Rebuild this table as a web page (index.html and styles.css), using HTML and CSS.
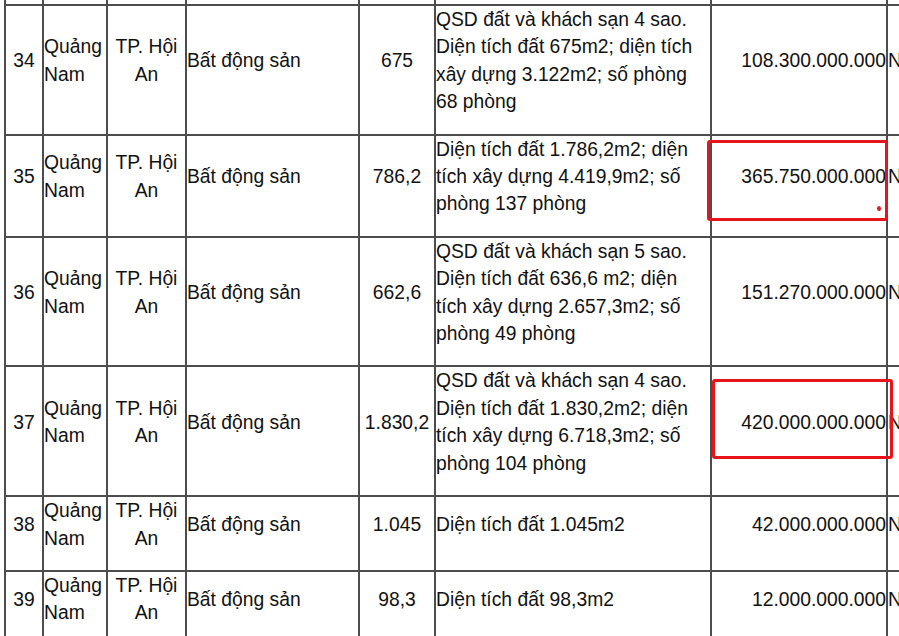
FILE: index.html
```html
<!DOCTYPE html>
<html lang="vi">
<head>
<meta charset="utf-8">
<title>Danh sách tài sản</title>
<link rel="stylesheet" href="styles.css">
</head>
<body>
<div class="page">
  <table class="assets">
    <tr class="spacer">
      <td class="c-no"></td><td class="c-prov"></td><td class="c-city"></td><td class="c-type"></td><td class="c-area"></td><td class="c-desc"></td><td class="c-price"></td><td class="c-next"></td>
    </tr>
    <tr>
      <td class="center">34</td>
      <td>Quảng Nam</td>
      <td class="center">TP. Hội An</td>
      <td>Bất động sản</td>
      <td class="center">675</td>
      <td>QSD đất và khách sạn 4 sao. Diện tích đất 675m2; diện tích xây dựng 3.122m2; số phòng 68 phòng</td>
      <td class="right">108.300.000.000</td>
      <td>Nhà nước</td>
    </tr>
    <tr>
      <td class="center">35</td>
      <td>Quảng Nam</td>
      <td class="center">TP. Hội An</td>
      <td>Bất động sản</td>
      <td class="center">786,2</td>
      <td>Diện tích đất 1.786,2m2; diện tích xây dựng 4.419,9m2; số phòng 137 phòng</td>
      <td class="right">365.750.000.000</td>
      <td>Nhà nước</td>
    </tr>
    <tr>
      <td class="center">36</td>
      <td>Quảng Nam</td>
      <td class="center">TP. Hội An</td>
      <td>Bất động sản</td>
      <td class="center">662,6</td>
      <td>QSD đất và khách sạn 5 sao. Diện tích đất 636,6 m2; diện tích xây dựng 2.657,3m2; số phòng 49 phòng</td>
      <td class="right">151.270.000.000</td>
      <td>Nhà nước</td>
    </tr>
    <tr>
      <td class="center">37</td>
      <td>Quảng Nam</td>
      <td class="center">TP. Hội An</td>
      <td>Bất động sản</td>
      <td class="center">1.830,2</td>
      <td>QSD đất và khách sạn 4 sao. Diện tích đất 1.830,2m2; diện tích xây dựng 6.718,3m2; số phòng 104 phòng</td>
      <td class="right">420.000.000.000</td>
      <td>Nhà nước</td>
    </tr>
    <tr>
      <td class="center">38</td>
      <td>Quảng Nam</td>
      <td class="center">TP. Hội An</td>
      <td>Bất động sản</td>
      <td class="center">1.045</td>
      <td>Diện tích đất 1.045m2</td>
      <td class="right">42.000.000.000</td>
      <td>Nhà nước</td>
    </tr>
    <tr>
      <td class="center">39</td>
      <td>Quảng Nam</td>
      <td class="center">TP. Hội An</td>
      <td>Bất động sản</td>
      <td class="center">98,3</td>
      <td>Diện tích đất 98,3m2</td>
      <td class="right">12.000.000.000</td>
      <td>Nhà nước</td>
    </tr>
  </table>
  <div class="mark mark-1"></div>
  <div class="dot"></div>
  <div class="mark mark-2"></div>
</div>
</body>
</html>
```

FILE: styles.css
```css
html, body {
  margin: 0;
  padding: 0;
  background: #fff;
  overflow: hidden;
  width: 899px;
  height: 636px;
}

.page {
  position: relative;
  padding-left: 4px;
  width: 1200px;
  font-family: "Liberation Sans", Arial, sans-serif;
  font-size: 19.3px;
  line-height: 27.4px;
  color: #111;
}

.assets {
  border-collapse: separate;
  border-spacing: 0;
  table-layout: fixed;
  border-left: 2px solid #4d4d4d;
}

.assets td {
  border-right: 2px solid #4d4d4d;
  border-bottom: 2px solid #4d4d4d;
  padding: 0 0 18px 0;
  vertical-align: middle;
  text-align: left;
}

.assets .spacer td {
  height: 4px;
  padding: 0;
}

.c-no { width: 36px; }
.c-prov { width: 62px; }
.c-city { width: 77px; }
.c-type { width: 171px; }
.c-area { width: 74px; }
.c-desc { width: 274px; }
.c-price { width: 174px; }
.c-next { width: 200px; }

.assets td.center { text-align: center; }
.assets td.right { text-align: right; }

.mark {
  position: absolute;
  border: 3px solid #e8141b;
  border-radius: 3px;
  box-sizing: border-box;
}

.mark-1 {
  left: 707px;
  top: 140px;
  width: 181px;
  height: 81px;
}

.mark-2 {
  left: 712px;
  top: 379px;
  width: 181px;
  height: 80px;
}

.dot {
  position: absolute;
  left: 877px;
  top: 206px;
  width: 4px;
  height: 5px;
  border-radius: 50%;
  background: #e8141b;
}
```
